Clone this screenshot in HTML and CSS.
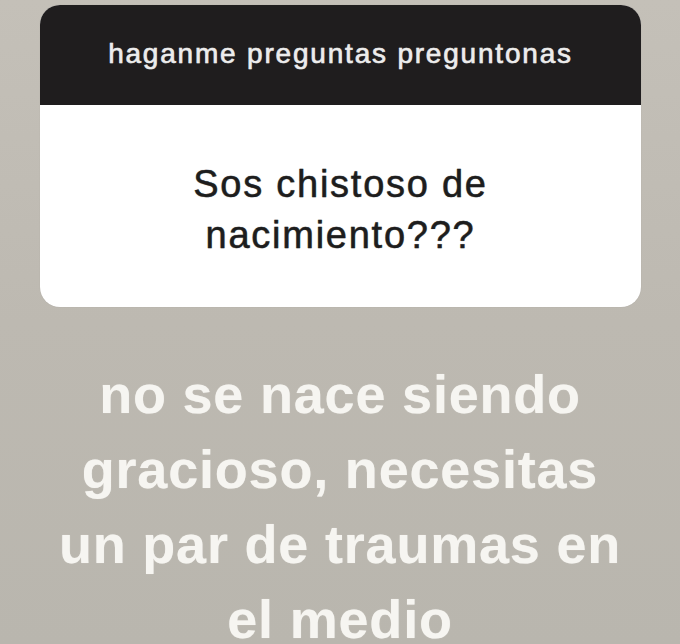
FILE: index.html
```html
<!DOCTYPE html>
<html lang="es">
<head>
<meta charset="utf-8">
<title>Preguntas</title>
<link rel="stylesheet" href="styles.css">
</head>
<body>
<main class="story">
  <section class="card">
    <header class="card-head">haganme preguntas preguntonas</header>
    <div class="card-body">
      <p class="question">Sos chistoso de<br>nacimiento???</p>
    </div>
  </section>
  <p class="answer">no se nace siendo<br>gracioso, necesitas<br>un par de traumas en<br>el medio</p>
</main>
</body>
</html>
```
FILE: styles.css
```css
html, body {
  margin: 0;
  padding: 0;
}
body {
  width: 680px;
  height: 644px;
  overflow: hidden;
  background: linear-gradient(180deg, #c4c0b8 0%, #bdb9b1 50%, #b9b6ae 100%);
  font-family: "Liberation Sans", Arial, sans-serif;
}
.story {
  display: flex;
  flex-direction: column;
  align-items: center;
  padding-top: 5px;
}
.card {
  width: 601px;
  margin-left: 1px;
  border-radius: 20px;
  overflow: hidden;
  background: #ffffff;
  box-shadow: 0 0 1px rgba(0,0,0,0.15);
}
.card-head {
  height: 100px;
  background: #1f1d1e;
  color: #ececec;
  font-size: 28px;
  letter-spacing: 1.8px;
  display: flex;
  align-items: center;
  justify-content: center;
  padding-bottom: 3px;
  box-sizing: border-box;
  -webkit-text-stroke: 0.5px #ececec;
  text-shadow: 0 0 1px rgba(236,236,236,0.6);
}
.card-body {
  height: 202px;
  display: flex;
  align-items: center;
  justify-content: center;
  padding-top: 8px;
  box-sizing: border-box;
}
.question {
  margin: 0;
  text-align: center;
  color: #1d1d1d;
  font-size: 38px;
  letter-spacing: 1.75px;
  line-height: 51px;
  -webkit-text-stroke: 0.4px #1d1d1d;
  text-shadow: 0 0 1px rgba(29,29,29,0.5);
}
.answer {
  margin: 50px 0 0;
  text-align: center;
  color: #f6f5f1;
  font-weight: bold;
  font-size: 54px;
  letter-spacing: 0.8px;
  line-height: 75px;
  text-shadow: 0 0 1px rgba(246,245,241,0.6);
}
```
